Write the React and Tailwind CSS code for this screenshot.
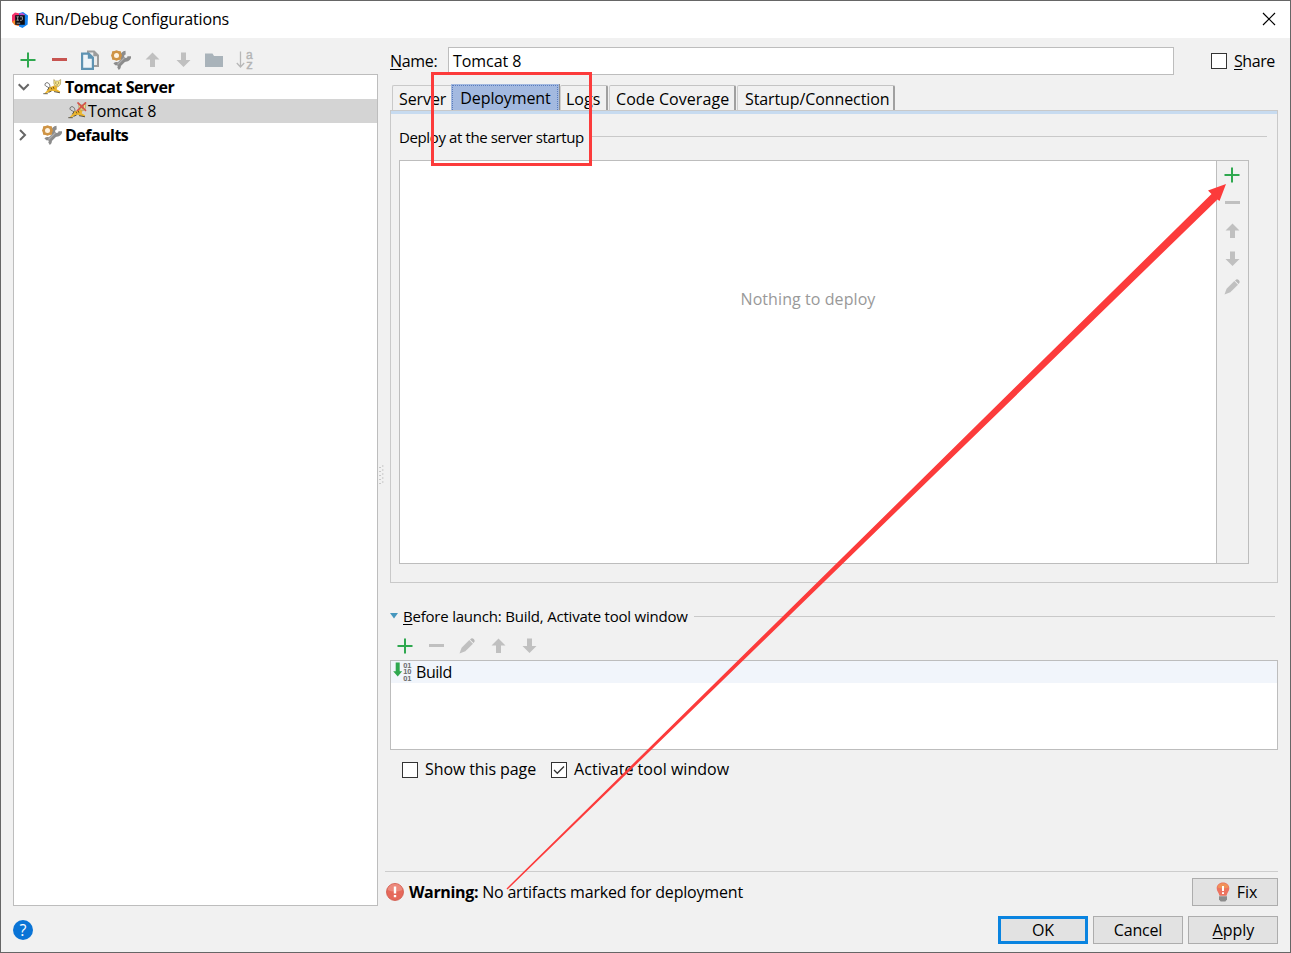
import React from "react";

const Icon = ({ children, className = "" }) => (
  <svg width="18" height="18" viewBox="0 0 18 18" className={`block shrink-0 ${className}`}>
    {children}
  </svg>
);

const Plus = () => (
  <Icon>
    <path d="M9 1.5v15M1.5 9h15" stroke="#2fa84f" strokeWidth="2" fill="none" />
  </Icon>
);
const Minus = ({ color = "#c0c0c0" }) => (
  <Icon>
    <path d="M2 8.500h15" stroke={color} strokeWidth="3" fill="none" />
  </Icon>
);
const Up = () => (
  <Icon>
    <path d="M9.500 1.500L16.500 8.600H12V16H7V8.600H2.500z" fill="#c0c0c0" />
  </Icon>
);
const Down = () => (
  <Icon>
    <path d="M9.500 16L16.500 8.900H12V1.500H7V8.900H2.500z" fill="#c0c0c0" />
  </Icon>
);
const Pencil = () => (
  <Icon>
    <path d="M1.500 16.500L3.600 10.800L11.300 3.100L15 6.700L7.300 14.200z" fill="#c0c0c0" />
    <path d="M12 2.500L13.300 1.400Q14.600 1 15.700 2.100Q17 3.200 16.600 4.500L15.600 6z" fill="#b8b8b8" />
  </Icon>
);
const Copy = () => (
  <svg width="20" height="20" viewBox="0 0 20 20" className="block shrink-0">
    <path d="M7 .5H14.500L19 5V17H7z" fill="#9c9c9c" />
    <path d="M9 2.500H13.300V6.300H17V15H9z" fill="#ececec" />
    <path d="M1 2.500H9.200L14 7.300V20H1z" fill="#5e93b3" />
    <path d="M3.200 4.700H7.800V8.800H11.800V17.800H3.200z" fill="#eff5f9" />
  </svg>
);
const Wrench = () => (
  <svg width="20" height="20" viewBox="0 0 20 20" className="block shrink-0">
    <g fill="none" stroke="#8c8c8c">
      <path d="M13 9.500L8 14.500" strokeWidth="4.600" />
      <path d="M14.600 2.600A3.600 3.600 0 1 0 18.400 6.200" strokeWidth="3.800" />
      <path d="M3.600 14.500A2.700 2.700 0 1 1 7 18.600" strokeWidth="3.200" />
    </g>
    <path d="M13.500 7.600L6.500 14.500" stroke="#b0b0b0" strokeWidth="1.300" />
    <path d="M5.500 .2L7.500 1 9.800 1.300 10.200 3.600 11 5.500 10.200 7.400 9.800 9.700 7.500 10 5.500 10.800 3.500 10 1.200 9.700.8 7.400 0 5.500.8 3.600 1.200 1.300 3.500 1z" fill="#cf9445" />
    <circle cx="5.500" cy="5.500" r="2.500" fill="#fff4e2" />
  </svg>
);
const Folder = () => (
  <Icon>
    <path d="M0 2.500h7.500l1.500 2.600h9V16H0z" fill="#a9b3ba" />
  </Icon>
);
const SortAZ = () => (
  <svg width="20" height="20" viewBox="0 0 20 20" className="block shrink-0 overflow-visible">
    <path d="M5.500 1.500v15M1.800 13l3.700 4 3.700-4" stroke="#b8b8b8" strokeWidth="1.300" fill="none" />
    <text x="11" y="8.500" fontSize="12" fontFamily="Liberation Sans, sans-serif" fill="#b4b4b4" stroke="#b4b4b4" strokeWidth=".4">a</text>
    <text x="11.300" y="19" fontSize="13" fontFamily="Liberation Sans, sans-serif" fill="#b4b4b4" stroke="#b4b4b4" strokeWidth=".4">z</text>
  </svg>
);
const Cat = ({ crossed }) => (
  <svg width="19" height="18" viewBox="0 0 19 18" className="block shrink-0">
    <path d="M7 9.800C7.200 7 6 4.600 4 4.600S1.200 7.200 2.700 8s2.600 1.300 4.200 2.300" fill="none" stroke="#6a6a6a" strokeWidth=".9" />
    <path d="M6.300 9.500L9.500 8.200 11.500 7.200 14.500 9 13.600 11.300 17.300 13.500 16.500 14.400 11.500 13.200 8.500 12.800 5.500 14.200 2.500 15.600 1.800 15 4.700 12z" fill="#ecb52c" />
    <path d="M10.800 1.500L12.500 3H15.400L17.700 1.500 17.500 6.200 15.500 8.500 12.800 8.200 10.900 6z" fill="#f8e68e" stroke="#8a7434" strokeWidth=".5" />
    <path d="M12.200 5h1.100M15 5h1.100M13.600 6.900h1.100M8 9.500l.8 1.900M10.200 8.900l.8 1.900" fill="none" stroke="#4a3f22" strokeWidth=".8" />
    <path d="M.3 15.700h4.500M11 13.600l6 1.200M4.300 12.300L6 9.700M5.500 14.400l3-1.300" fill="none" stroke="#3d3520" strokeWidth=".8" />
    {crossed && <path d="M9.500 .5l8.500 8.300M18 .3L9 9" stroke="#d5524a" strokeWidth="1.700" fill="none" />}
  </svg>
);
const Ide = () => (
  <svg width="16" height="16" viewBox="0 0 16 16" className="block shrink-0">
    <path d="M0 3L3 .6 8 1.500 7 14 3 12.500 0 10z" fill="#f4326b" />
    <path d="M0 9.500l4-2 3 6.500-4.500-1z" fill="#fa8a28" />
    <path d="M7 1.200L11 0l5 3.400-.4 9.200L10.500 16 7 14.400z" fill="#1683f0" />
    <path d="M10 1l3 1.600L11 5 7 2z" fill="#c248c8" />
    <rect x="3.200" y="3.200" width="9.600" height="9.600" fill="#0c0c14" />
    <path d="M4.500 4.800h2.400M5.700 4.800v3.400M4.500 8.200h2.400M8 4.800h2.400v2.600q0 .9-1 .9H8M4.600 11.200h3.600" stroke="#bbb" strokeWidth=".8" fill="none" />
  </svg>
);
const BuildIcon = () => (
  <svg width="19" height="20" viewBox="0 0 19 20" className="block shrink-0 overflow-visible">
    <path d="M2.700 .5h4v8.700h2.500L4.700 14.500 .2 9.200h2.500z" fill="#2fa84f" />
    <g fill="#6b6b6b" fontFamily="Liberation Sans, sans-serif" fontSize="7.500" fontWeight="bold">
      <text x="10.200" y="6">01</text>
      <text x="10.200" y="12.400">10</text>
      <text x="10.200" y="18.800">01</text>
    </g>
  </svg>
);
const ErrorIcon = () => (
  <Icon>
    <circle cx="9" cy="9" r="8.500" fill="#e5695b" stroke="#cf5548" strokeWidth=".8" />
    <path d="M1.500 7a7.700 7.700 0 0 1 15 0q-7.500 3-15 0z" fill="#ec8a7d" />
    <path d="M7.800 3.500h2.400v7H7.800zM7.800 12h2.400v2.300H7.800z" fill="#fff" />
  </Icon>
);
const Bulb = () => (
  <svg width="14" height="20" viewBox="0 0 14 20" className="block shrink-0">
    <path d="M7 .5C3.300.5.700 3 .700 6.300c0 2.800 2 4.200 2.800 7.500h7c.800-3.300 2.800-4.700 2.800-7.500C13.300 3 10.700.5 7 .5z" fill="#ec7360" />
    <path d="M7 1.300C4 1.300 1.800 3 1.500 5.500q5.500 1.800 11 0C12.200 3 10 1.300 7 1.300z" fill="#f0935a" />
    <path d="M6 4h2v5H6zM6 10.200h2v1.800H6z" fill="#fff" />
    <path d="M3 14.200h8v3.300L9.300 19.500H4.700L3 17.500z" fill="#8c8c8c" />
  </svg>
);
const Check = ({ checked }) => (
  <span className="flex size-4 shrink-0 items-center justify-center border border-[#333] bg-white">
    {checked && (
      <svg width="14" height="14" viewBox="0 0 14 14" className="block">
        <path d="M2 7l3.300 3.300L12 3.500" fill="none" stroke="#333" strokeWidth="1.300" />
      </svg>
    )}
  </span>
);
const Key = ({ c }) => <span className="underline decoration-1 underline-offset-[2px] [text-decoration-skip-ink:none]">{c}</span>;
const Tab = ({ children, className }) => (
  <div className={`flex h-[25px] shrink-0 items-center rounded-t-[2px] border-t border-r-2 border-l border-t-[#c4c4c4] border-r-[#a0a0a0] border-l-[#cfcfcf] pt-[2px] whitespace-nowrap ${className}`}>
    {children}
  </div>
);
const Button = ({ children, className }) => (
  <button className={`flex h-7 shrink-0 items-center justify-center bg-[#e2e2e2] ${className}`}>{children}</button>
);

export default function App() {
  return (
    <div className="relative flex h-[953px] w-[1291px] flex-col overflow-hidden border border-[#666] bg-[#f1f1f1] font-['Open_Sans','Noto_Sans',sans-serif] text-[16px] leading-[22px] text-black">
      <header className="flex h-[37px] shrink-0 items-center bg-white pl-[11px]">
        <Ide />
        <h1 className="mb-px ml-[7px] tracking-[-0.17px]">Run/Debug Configurations</h1>
        <svg width="14" height="14" viewBox="0 0 14 14" className="mr-[14px] mb-px ml-auto block">
          <path d="M1 1l12 12M13 1L1 13" stroke="#000" strokeWidth="1.200" />
        </svg>
      </header>

      <div className="flex h-[868px] shrink-0">
        <aside className="ml-3 flex w-[365px] shrink-0 flex-col">
          <div className="flex h-9 shrink-0 items-center pt-[7px] pl-[5px]">
            <div className="flex items-center">
              {[<Plus />, <Minus color="#c75450" />, <Copy />, <Wrench />, <Up />, <Down />, <Folder />, <SortAZ />].map((icon, i) => (
                <div key={i} className="mr-[11px] flex w-5 items-center justify-center">{icon}</div>
              ))}
            </div>
          </div>
          <div className="flex h-[832px] flex-col border border-[#bdbdbd] bg-white">
            <div className="flex h-6 items-center pl-1 font-bold tracking-[-0.46px]">
              <svg width="12" height="12" viewBox="0 0 12 12" className="block"><path d="M.700 3.300l5 5 5-5" fill="none" stroke="#666" strokeWidth="2" /></svg>
              <span className="ml-[13px]"><Cat /></span>
              <span className="ml-[3px]">Tomcat Server</span>
            </div>
            <div className="flex h-6 items-center bg-[#d4d4d4] pl-[54px]">
              <Cat crossed />
              <span className="ml-px tracking-[-0.05px]">Tomcat 8</span>
            </div>
            <div className="flex h-6 items-center pl-[2px] font-bold tracking-[-0.52px]">
              <svg width="12" height="12" viewBox="0 0 12 12" className="block"><path d="M4 1l5 5-5 5" fill="none" stroke="#666" strokeWidth="2" /></svg>
              <span className="ml-[14px]"><Wrench /></span>
              <span className="ml-[3px]">Defaults</span>
            </div>
          </div>
        </aside>

        <div className="flex w-[12px] shrink-0 items-center pt-[5px] pl-px">
          <svg width="5" height="20" viewBox="0 0 5 20" className="block">
            <path d="M1 2v18" stroke="#bbb" strokeWidth="1.500" strokeDasharray="1 3" />
            <path d="M3.700 .5v18" stroke="#bbb" strokeWidth="1.500" strokeDasharray="1 3" />
          </svg>
        </div>

        <main className="flex w-[888px] shrink-0 flex-col">
          <div className="mt-[9px] flex h-7 shrink-0 items-center">
            <label className="w-[58px] tracking-[-0.3px]"><Key c="N" />ame:</label>
            <div className="flex h-7 w-[726px] items-center border border-[#bdbdbd] bg-white pl-[4px] tracking-[-0.05px]">Tomcat 8</div>
            <div className="ml-[37px] flex items-center">
              <Check />
              <span className="mb-px ml-[7px] tracking-[-0.45px]"><Key c="S" />hare</span>
            </div>
          </div>

          <div className="mt-[9px] flex h-[26px] shrink-0 items-end pl-[2px]">
            <div className="flex h-[25px] w-[59px] shrink-0 items-center rounded-tl-[2px] border-t border-l border-[#c9c9c9] pt-[2px] pl-[6px] tracking-[-0.1px]">Server</div>
            <div className="flex h-[26px] w-[109px] shrink-0 items-center border-r border-[#8f8f8f] bg-[#a3b9e0] p-px pb-0">
              <div className="flex h-[25px] w-full items-center justify-center border border-b-0 border-dotted border-[#5b7dbd] pl-px tracking-[-0.1px]">Deployment</div>
            </div>
            <Tab className="w-[48px] pl-[5px]">Logs</Tab>
            <Tab className="ml-px w-[127px] pl-[6px] tracking-[0.06px]">Code Coverage</Tab>
            <Tab className="ml-px w-[158px] pl-[7px] tracking-[-0.1px]">Startup/Connection</Tab>
          </div>

          <section className="flex h-[473px] shrink-0 flex-col border border-[#c9c9c9]">
            <div className="h-[3px] shrink-0 bg-[#c7dbf0]" />
            <div className="mt-[13px] flex h-[22px] shrink-0 items-center pr-[10px] pl-2 text-[15px] tracking-[-0.38px]">
              <span className="mb-[2px] shrink-0">Deploy at the server startup</span>
              <span className="mb-[3px] ml-[7px] h-px grow bg-[#c9c9c9]" />
            </div>
            <div className="mt-[11px] ml-2 flex h-[404px] w-[850px] shrink-0 border border-[#bdbdbd]">
              <div className="flex w-[816px] justify-center bg-white pt-[127px] text-[#999] tracking-[0.08px]">Nothing to deploy</div>
              <div className="flex grow flex-col items-center gap-[10px] border-l border-[#bdbdbd] pt-[5px] pr-[2px]">
                <Plus />
                <Minus />
                <Up />
                <Down />
                <Pencil />
              </div>
            </div>
          </section>

          <div className="mt-[23px] flex h-[22px] shrink-0 items-center text-[15px] tracking-[-0.21px]">
            <svg width="8" height="6" viewBox="0 0 8 6" className="mb-[3px] block shrink-0"><path d="M0 0h8L4 5.500z" fill="#4596bd" /></svg>
            <span className="mb-[2px] ml-[5px] shrink-0"><Key c="B" />efore launch: Build, Activate tool window</span>
            <span className="mr-[3px] mb-px ml-[6px] h-px grow bg-[#c9c9c9]" />
          </div>
          <div className="mt-[9px] flex h-[18px] shrink-0 gap-[13px] pl-[6px]">
            <Plus />
            <Minus />
            <Pencil />
            <Up />
            <Down />
          </div>
          <div className="mt-[5px] h-[90px] shrink-0 border border-[#bdbdbd] bg-white">
            <div className="flex h-[22px] items-center bg-[#f1f5fb] pl-[2px]">
              <BuildIcon />
              <span className="ml-[4px] tracking-[-0.45px]">Build</span>
            </div>
          </div>
          <div className="mt-[9px] flex h-[22px] shrink-0 items-center pl-3">
            <Check />
            <span className="mb-[2px] ml-[7px] tracking-[-0.1px]">Show this page</span>
            <span className="ml-[15px]"><Check checked /></span>
            <span className="mb-[2px] ml-[7px] tracking-[0.03px]">Activate tool window</span>
          </div>

          <div className="mt-[90px] -ml-[5px] h-px shrink-0 bg-[#cdcdcd]" />
          <div className="mt-[6px] -ml-1 flex h-7 shrink-0 items-center">
            <ErrorIcon />
            <span className="ml-[5px] font-bold tracking-[-0.35px]">Warning:</span>
            <span className="ml-[4px] tracking-[-0.19px]">No artifacts marked for deployment</span>
            <Button className="ml-auto w-[86px] gap-[7px] border border-[#adadad] pl-[3px]"><Bulb />Fix</Button>
          </div>
        </main>
      </div>

      <footer className="flex shrink-0 items-center pt-[10px] pr-3 pl-3">
        <div className="flex size-5 items-center justify-center rounded-full bg-[#0a74d6] text-[16px] leading-5 text-white">?</div>
        <div className="ml-auto flex gap-[5px]">
          <Button className="w-[90px] border-[3px] border-[#0a84e0]">OK</Button>
          <Button className="w-[90px] border border-[#adadad] tracking-[-0.2px]">Cancel</Button>
          <Button className="w-[90px] border border-[#adadad] pl-px"><span><Key c="A" />pply</span></Button>
        </div>
      </footer>

      <svg width="1291" height="953" viewBox="0 0 1291 953" className="pointer-events-none absolute -top-px -left-px">
        <rect x="432.500" y="73.500" width="158" height="91" fill="none" stroke="#fc3b3b" strokeWidth="3" />
        <path d="M506.500 888.500L1211.500 194L1208 190.500L1226 184L1219.500 201L1217.500 199.500L507.500 889.500z" fill="#fc3b3b" />
      </svg>
    </div>
  );
}
